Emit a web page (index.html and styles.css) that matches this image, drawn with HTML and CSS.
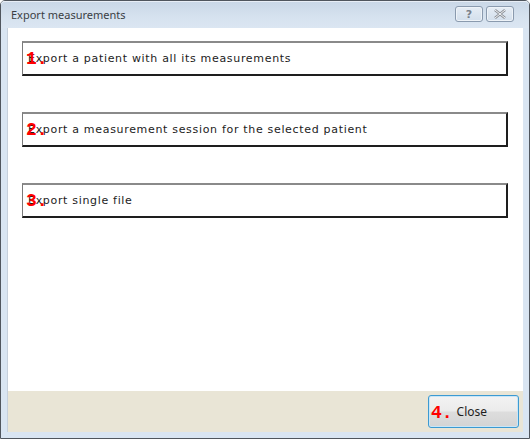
FILE: index.html
```html
<!DOCTYPE html>
<html>
<head>
<meta charset="utf-8">
<link rel="stylesheet" href="styles.css">
</head>
<body>
<div class="window">
  <div class="titlebar">
    <span class="title">Export measurements</span>
    <div class="tbuttons">
      <span class="tbtn">?</span>
      <span class="tbtn close-x">
        <svg width="14" height="10" viewBox="0 0 14 10"><path d="M2 1 L12 9 M12 1 L2 9" stroke="#8b8f96" stroke-width="2.6" fill="none"/><path d="M2 1 L12 9 M12 1 L2 9" stroke="#f4f6f8" stroke-width="1" fill="none"/></svg>
      </span>
    </div>
  </div>
  <div class="client">
    <div class="content">
      <div class="option"><span class="num">1.</span><span class="label">Export a patient with all its measurements</span></div>
      <div class="option"><span class="num">2.</span><span class="label">Export a measurement session for the selected patient</span></div>
      <div class="option"><span class="num">3.</span><span class="label">Export single file</span></div>
    </div>
    <div class="footer">
      <div class="closebtn"><span class="num4">4.</span><span class="closetext">Close</span></div>
    </div>
  </div>
</div>
</body>
</html>
```
FILE: styles.css
```css
html, body {
  margin: 0;
  padding: 0;
  background: #ffffff;
}
.window {
  box-sizing: border-box;
  width: 530px;
  height: 439px;
  border: 1px solid #50565e;
  border-radius: 5px 5px 0 0;
  background: #d9e5f2;
  display: flex;
  flex-direction: column;
  padding: 0 6px 6px 6px;
}
.titlebar {
  height: 27px;
  flex: none;
  margin: 0 -6px;
  padding: 0 6px 0 10px;
  display: flex;
  align-items: center;
  justify-content: space-between;
  background: linear-gradient(#c9d7e7, #d6e2ef 60%, #dbe6f2);
  border-radius: 4px 4px 0 0;
  box-shadow: inset 0 1px 0 #e8eef6;
}
.title {
  font-family: "Noto Sans", "DejaVu Sans", sans-serif;
  font-size: 11px;
  color: #3a3e44;
  margin-top: -1px;
}
.tbuttons {
  display: flex;
  gap: 3px;
  margin-top: -1px;
  margin-right: 9px;
}
.tbtn {
  box-sizing: border-box;
  width: 28px;
  height: 16px;
  border: 1px solid #8a9aae;
  border-radius: 3px;
  background: linear-gradient(#e6edf5, #d3dfec);
  box-shadow: inset 0 0 0 1px #eef3f8;
  display: flex;
  align-items: center;
  justify-content: center;
  font-family: "DejaVu Sans", sans-serif;
  font-weight: bold;
  font-size: 11px;
  color: #7a818c;
}
.client {
  flex: 1;
  display: flex;
  flex-direction: column;
  border-left: 1px solid #c6d0dc;
}
.content {
  flex: 1;
  background: #ffffff;
  padding: 13px 14px 0 14px;
  display: flex;
  flex-direction: column;
  gap: 36px;
}
.option {
  position: relative;
  box-sizing: border-box;
  height: 35px;
  width: 486px;
  border-top: 2px solid #8a8a8a;
  border-left: 1px solid #7a7a7a;
  border-right: 2px solid #1e1e1e;
  border-bottom: 2px solid #1e1e1e;
  background: #ffffff;
  display: flex;
  align-items: center;
  padding-left: 5px;
}
.label {
  font-family: "DejaVu Sans", sans-serif;
  font-size: 11px;
  color: #1c1c1c;
  letter-spacing: 0.68px;
}
.num {
  position: absolute;
  left: 3px;
  top: 5px;
  font-family: "Liberation Mono", monospace;
  font-weight: bold;
  font-size: 18px;
  color: #ff0000;
  line-height: 22px;
}
.footer {
  height: 41px;
  flex: none;
  background: #e9e5d6;
  display: flex;
  justify-content: flex-end;
  align-items: flex-start;
  padding: 4px 4px 0 0;
  box-sizing: border-box;
}
.closebtn {
  box-sizing: border-box;
  width: 91px;
  height: 33px;
  border: 1px solid #3c9ad2;
  border-radius: 3px;
  background: linear-gradient(#f3f3f3, #ebebeb 48%, #dddddd 52%, #d4d4d4);
  box-shadow: inset 0 0 0 1px #c9e6f7;
  display: flex;
  align-items: center;
  padding-left: 2px;
}
.num4 {
  font-family: "Liberation Mono", monospace;
  font-weight: bold;
  font-size: 18px;
  color: #ff0000;
  margin-top: 2px;
}
.closetext {
  font-family: "Noto Sans", "DejaVu Sans", sans-serif;
  font-size: 12px;
  color: #1e1e1e;
  margin-left: 4px;
}
```
